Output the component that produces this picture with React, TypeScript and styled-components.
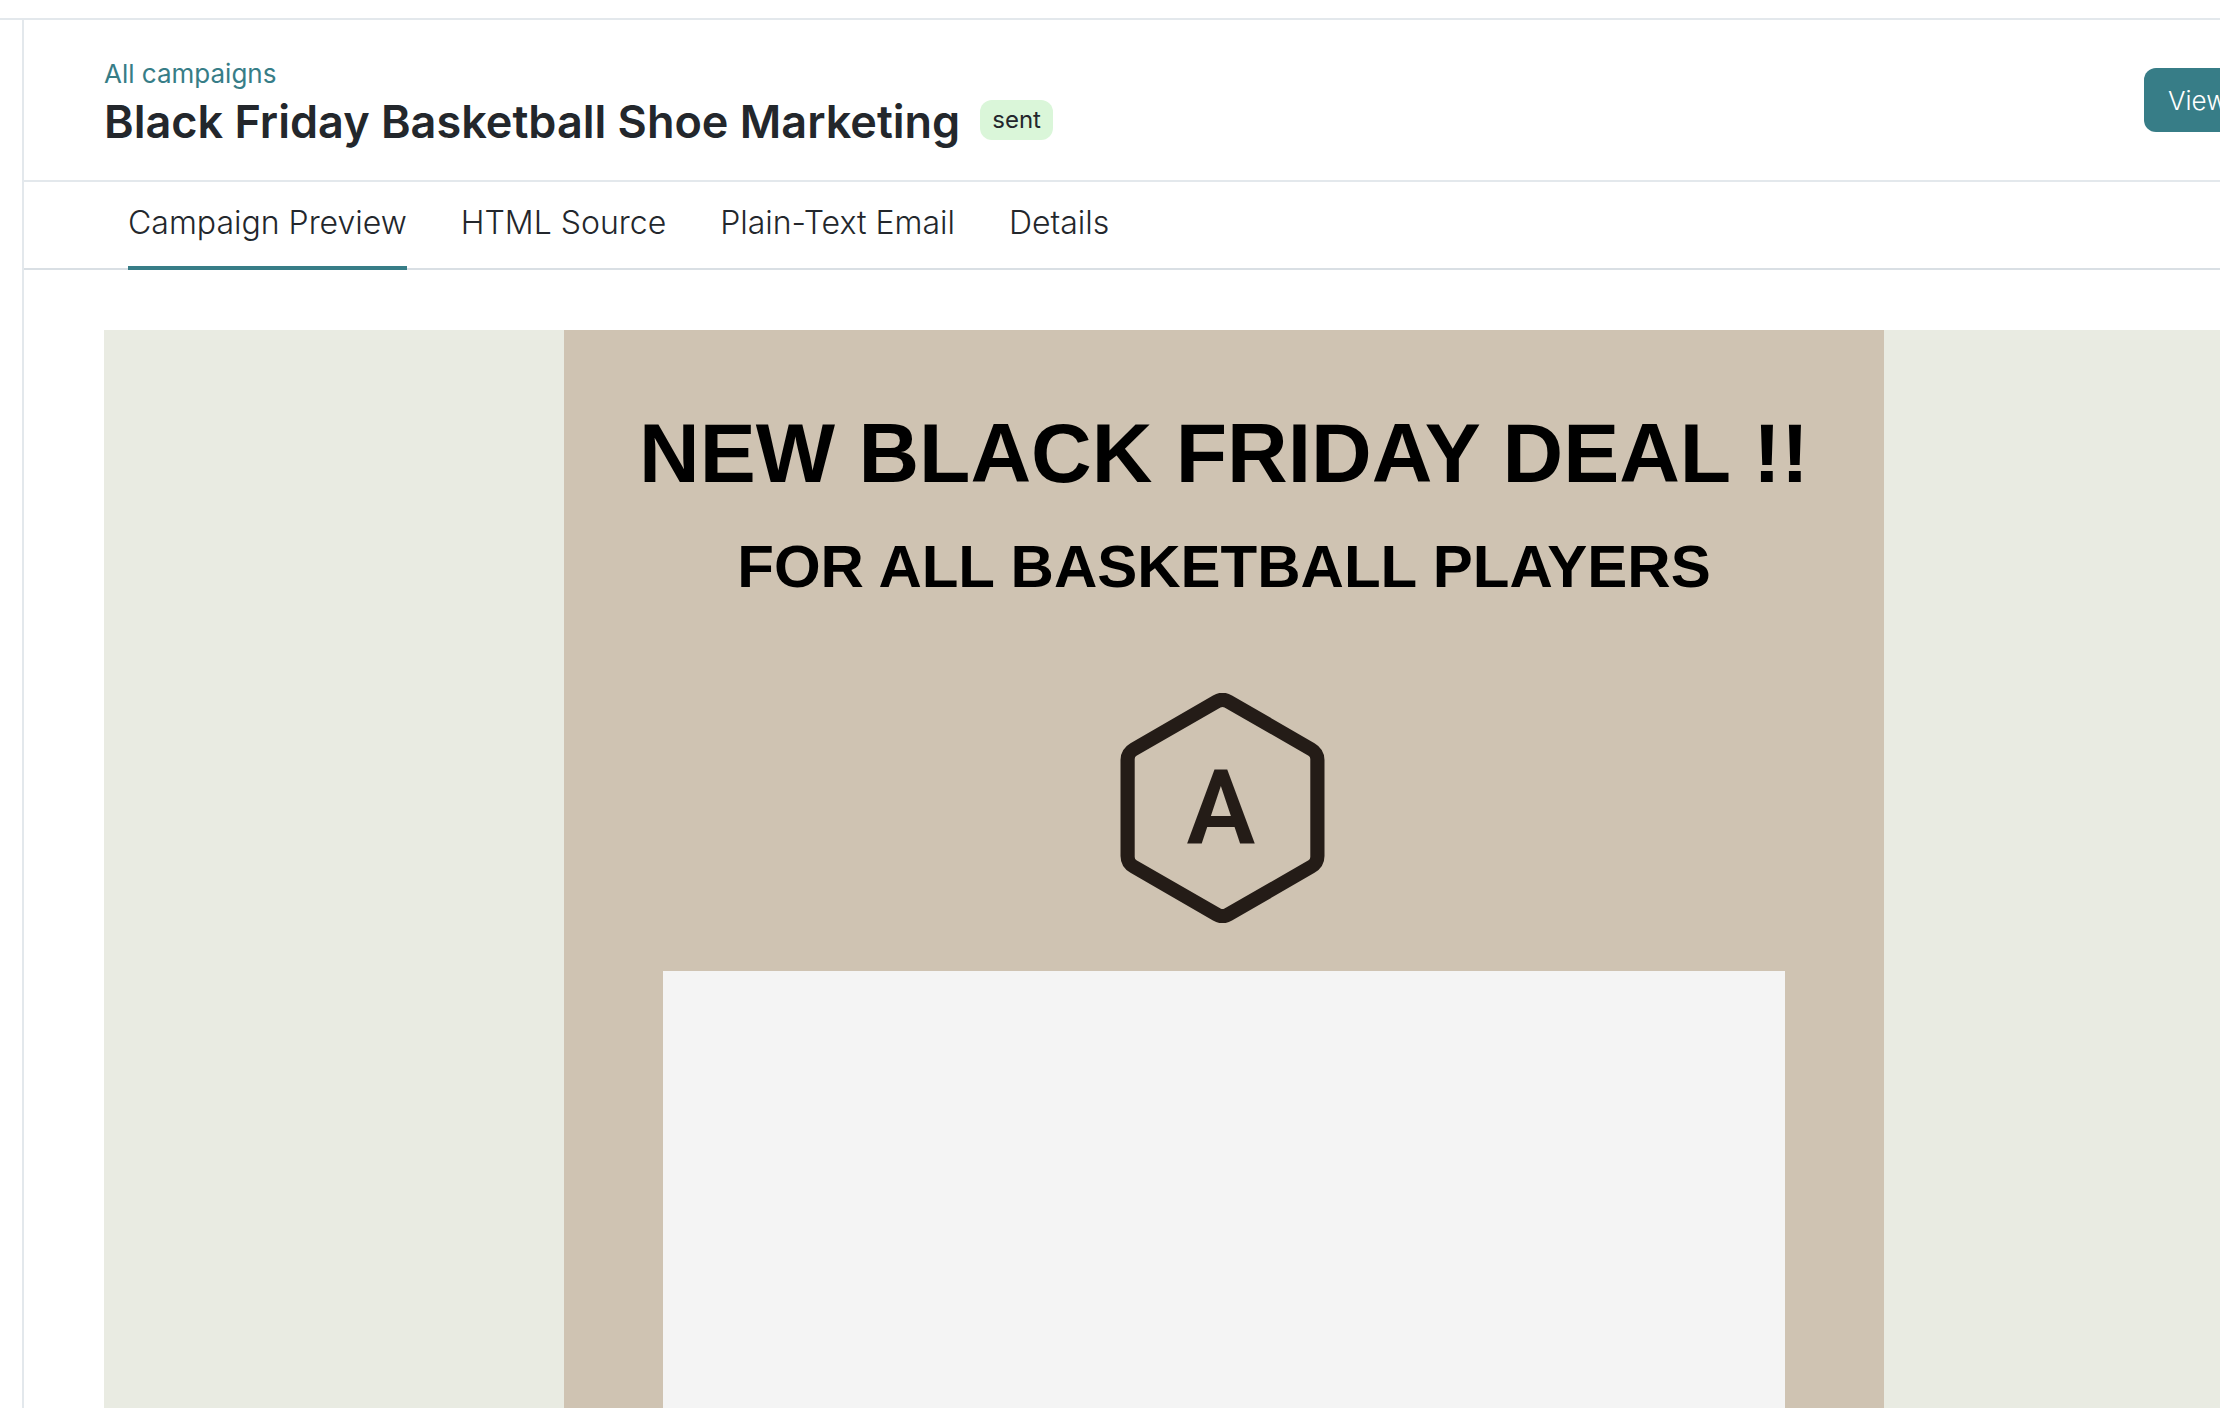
import React, { useState } from 'react';
import styled, { createGlobalStyle } from 'styled-components';

const color = {
  text: '#23272c',
  teal: '#377d87',
  line: '#e3e8ec',
  tabLine: '#d9dfe4',
  badge: '#daf6d9',
  canvas: '#e9ebe2',
  email: '#cfc3b2',
  placeholder: '#f4f4f4',
  logo: '#241c17',
};

const GlobalStyle = createGlobalStyle`
  *, *::before, *::after { box-sizing: border-box; }
  body {
    margin: 0;
    background: #fff;
    color: ${color.text};
    font-family: Inter, 'Liberation Sans', sans-serif;
    font-size: 26px;
  }
  h1, h2, p { margin: 0; }
  button { font: inherit; color: inherit; border: 0; background: none; }
`;

const Shell = styled.div`
  display: flex;
  flex-direction: column;
  height: 100vh;
  overflow: hidden;
`;

const TopBar = styled.div`
  flex: none;
  height: 20px;
  border-bottom: 2px solid ${color.line};
`;

const Body = styled.div`
  flex: 1;
  display: flex;
  min-height: 0;
`;

const Rail = styled.aside`
  flex: none;
  width: 24px;
  border-right: 2px solid ${color.line};
`;

/* The workspace runs past the right edge of the window. */
const Main = styled.main`
  flex: 1;
  display: flex;
  flex-direction: column;
  margin-right: -204px;
`;

const Header = styled.header`
  display: flex;
  align-items: center;
  justify-content: space-between;
  padding: 0 80px;
  border-bottom: 2px solid ${color.line};
`;

const Heading = styled.div`
  padding: 36px 0 28px;
`;

const BackLink = styled.a`
  display: block;
  line-height: 36px;
  color: ${color.teal};
  text-decoration: none;
`;

const TitleRow = styled.div`
  display: flex;
  align-items: flex-start;
  gap: 20px;
`;

const Title = styled.h1`
  font-size: 45px;
  font-weight: 600;
  line-height: 60px;
`;

const Badge = styled.span`
  margin-top: 8px;
  padding: 0 12px;
  border-radius: 12px;
  background: ${color.badge};
  font-size: 24px;
  line-height: 40px;
`;

const PrimaryButton = styled.button`
  width: 200px;
  height: 64px;
  padding: 0 24px;
  border-radius: 12px;
  background: ${color.teal};
  color: #fff;
  font-weight: 300;
  text-align: left;
`;

const TabList = styled.div`
  display: flex;
  gap: 54px;
  padding: 0 104px;
  border-bottom: 2px solid ${color.tabLine};
`;

const Tab = styled.button<{ $active: boolean }>`
  margin-bottom: -2px;
  padding: 21px 0 23px;
  border-bottom: 4px solid ${(p) => (p.$active ? color.teal : 'transparent')};
  font-size: 32px;
  font-weight: 300;
  line-height: 40px;
`;

const Preview = styled.section`
  flex: 1;
  display: flex;
  justify-content: center;
  margin: 60px 80px 0;
  background: ${color.canvas};
`;

const Email = styled.article`
  flex: 0 1 1320px;
  display: flex;
  flex-direction: column;
  align-items: center;
  padding-top: 58px;
  background: ${color.email};
  color: #000;
  font-family: 'Liberation Sans', Arial, sans-serif;
  text-align: center;
`;

const EmailTitle = styled.h1`
  font-size: 84px;
  line-height: 130px;
`;

const EmailSubtitle = styled.h2`
  font-size: 60px;
  line-height: 98px;
`;

const Logo = styled.svg`
  flex: none;
  width: 208px;
  height: 230px;
  margin: 77px 0 48px;
`;

const LogoLetter = styled.text`
  font-family: Roboto, sans-serif;
  font-size: 103px;
  font-weight: 600;
  text-anchor: middle;
  fill: ${color.logo};
`;

const ImagePlaceholder = styled.div`
  flex: 1;
  width: 85%;
  background: ${color.placeholder};
`;

const tabs = ['Campaign Preview', 'HTML Source', 'Plain-Text Email', 'Details'];

function BrandLogo() {
  return (
    <Logo viewBox="0 0 208 230" role="img" aria-label="Brand logo">
      <path
        d="M93 2.400Q102.500 -3 112 2.400L194.500 50.200Q204.500 56 204.500 67V163Q204.500 174 194.500 179.800L112 227.600Q102.500 233 93 227.600L10.500 179.800Q.5 174 .5 163V67Q.5 56 10.500 50.200ZM104.500 14.500Q102.500 13.300 100.500 14.500L16.500 62.700Q14.700 63.800 14.700 66V164Q14.700 166.200 16.500 167.300L100.500 215.500Q102.500 216.700 104.500 215.500L188.500 167.300Q190.300 166.200 190.300 164V66Q190.300 63.800 188.500 62.700Z"
        fill={color.logo}
        fillRule="evenodd"
      />
      <LogoLetter x="101" y="150">A</LogoLetter>
    </Logo>
  );
}

export default function App() {
  const [active, setActive] = useState(tabs[0]);

  return (
    <>
      <GlobalStyle />
      <Shell>
        <TopBar />
        <Body>
          <Rail />
          <Main>
            <Header>
              <Heading>
                <BackLink href="#campaigns">All campaigns</BackLink>
                <TitleRow>
                  <Title>Black Friday Basketball Shoe Marketing</Title>
                  <Badge>sent</Badge>
                </TitleRow>
              </Heading>
              <PrimaryButton type="button">View</PrimaryButton>
            </Header>
            <TabList role="tablist">
              {tabs.map((tab) => (
                <Tab
                  key={tab}
                  type="button"
                  role="tab"
                  aria-selected={tab === active}
                  $active={tab === active}
                  onClick={() => setActive(tab)}
                >
                  {tab}
                </Tab>
              ))}
            </TabList>
            <Preview>
              <Email>
                <EmailTitle>NEW BLACK FRIDAY DEAL !!</EmailTitle>
                <EmailSubtitle>FOR ALL BASKETBALL PLAYERS</EmailSubtitle>
                <BrandLogo />
                <ImagePlaceholder />
              </Email>
            </Preview>
          </Main>
        </Body>
      </Shell>
    </>
  );
}
